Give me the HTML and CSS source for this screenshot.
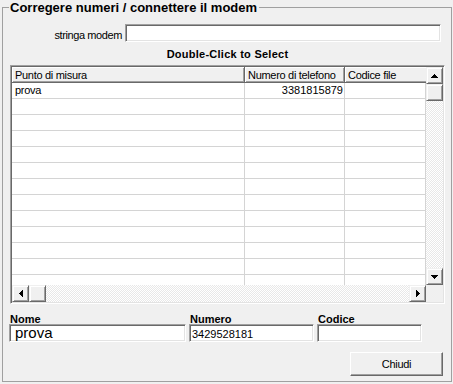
FILE: index.html
```html
<!DOCTYPE html>
<html>
<head>
<meta charset="utf-8">
<link rel="stylesheet" href="styles.css">
</head>
<body>
<div class="group">
  <div class="title">Corregere numeri / connettere il modem</div>
  <div class="modem-row">
    <span class="modem-label">stringa modem</span>
    <div class="edit modem-input"></div>
  </div>
  <div class="dbl">Double-Click to Select</div>
  <div class="listview">
    <div class="data">
      <div class="row head">
        <div class="c1">Punto di misura</div>
        <div class="c2">Numero di telefono</div>
        <div class="c3">Codice file</div>
      </div>
      <div class="row"><div class="c1">prova</div><div class="c2 num">3381815879</div><div class="c3"></div></div>
      <div class="row"><div class="c1"></div><div class="c2"></div><div class="c3"></div></div>
      <div class="row"><div class="c1"></div><div class="c2"></div><div class="c3"></div></div>
      <div class="row"><div class="c1"></div><div class="c2"></div><div class="c3"></div></div>
      <div class="row"><div class="c1"></div><div class="c2"></div><div class="c3"></div></div>
      <div class="row"><div class="c1"></div><div class="c2"></div><div class="c3"></div></div>
      <div class="row"><div class="c1"></div><div class="c2"></div><div class="c3"></div></div>
      <div class="row"><div class="c1"></div><div class="c2"></div><div class="c3"></div></div>
      <div class="row"><div class="c1"></div><div class="c2"></div><div class="c3"></div></div>
      <div class="row"><div class="c1"></div><div class="c2"></div><div class="c3"></div></div>
      <div class="row"><div class="c1"></div><div class="c2"></div><div class="c3"></div></div>
      <div class="row"><div class="c1"></div><div class="c2"></div><div class="c3"></div></div>
      <div class="row"><div class="c1"></div><div class="c2"></div><div class="c3"></div></div>
    </div>
    <div class="vscroll">
      <div class="sbtn"><svg width="7" height="4" viewBox="0 0 7 4"><path d="M3 0h1v1h1v1h1v1h1v1H0V3h1V2h1V1h1z" fill="#000"/></svg></div>
      <div class="sbtn"></div>
      <div class="track"></div>
      <div class="sbtn"><svg width="7" height="4" viewBox="0 0 7 4"><path d="M0 0h7v1H6v1H5v1H4v1H3V3H2V2H1V1H0z" fill="#000"/></svg></div>
    </div>
    <div class="hscroll">
      <div class="sbtn"><svg width="4" height="7" viewBox="0 0 4 7"><path d="M3 0h1v7H3V6H2V5H1V4H0V3h1V2h1V1h1z" fill="#000"/></svg></div>
      <div class="sbtn"></div>
      <div class="track"></div>
      <div class="sbtn"><svg width="4" height="7" viewBox="0 0 4 7"><path d="M0 0h1v1h1v1h1v1h1v1H3v1H2v1H1v1H0z" fill="#000"/></svg></div>
    </div>
    <div class="corner"></div>
  </div>
  <div class="fields">
    <div class="field f-nome">
      <div class="flabel">Nome</div>
      <div class="edit big">prova</div>
    </div>
    <div class="field f-num">
      <div class="flabel">Numero</div>
      <div class="edit">3429528181</div>
    </div>
    <div class="field f-cod">
      <div class="flabel">Codice</div>
      <div class="edit"></div>
    </div>
  </div>
  <div class="actions">
    <div class="button">Chiudi</div>
  </div>
</div>
</body>
</html>
```
FILE: styles.css
```css
html, body {
  margin: 0;
  padding: 0;
  background: #f0f0f0;
}
body {
  width: 453px;
  height: 384px;
  overflow: hidden;
  font-family: "Liberation Sans", Arial, sans-serif;
  font-size: 11px;
  color: #000;
}
.group {
  box-sizing: border-box;
  margin: 7px 0 0 2px;
  width: 450px;
  height: 375px;
  border: 1px solid #a0a0a0;
  display: flex;
  flex-direction: column;
}
.title {
  align-self: flex-start;
  margin: -8px 0 0 6px;
  padding: 0 2px 0 1px;
  background: #f0f0f0;
  font-weight: bold;
  font-size: 13px;
  line-height: 15px;
  height: 15px;
}
.modem-row {
  display: flex;
  align-items: center;
  margin-top: 9px;
  height: 18px;
}
.modem-label {
  width: 119px;
  text-align: right;
  letter-spacing: -0.4px;
  margin-right: 3px;
  padding-top: 3px;
}
.edit {
  box-sizing: border-box;
  height: 18px;
  background: #fff;
  border: 1px solid;
  border-color: #a0a0a0 #fff #fff #a0a0a0;
  box-shadow: inset 1px 1px #696969, inset -1px -1px #e3e3e3;
  padding: 2px 0 0 2px;
  line-height: 14px;
  white-space: nowrap;
  overflow: hidden;
}
.modem-input {
  width: 316px;
}
.dbl {
  margin-top: 6px;
  height: 13px;
  line-height: 13px;
  text-align: center;
  font-weight: bold;
  letter-spacing: 0.25px;
  padding-left: 1px;
}
.listview {
  margin: 4px 0 0 7px;
  width: 435px;
  height: 239px;
  box-sizing: border-box;
  border: 1px solid;
  border-color: #a0a0a0 #fff #fff #a0a0a0;
  box-shadow: inset 1px 1px #696969, inset -1px -1px #e3e3e3;
  padding: 1px;
  display: grid;
  grid-template-columns: 414px 17px;
  grid-template-rows: 218px 17px;
  background: #fff;
}
.data {
  overflow: hidden;
  background: #fff;
}
.row {
  display: grid;
  grid-template-columns: 233px 100px 81px;
  height: 16px;
}
.row > div {
  box-sizing: border-box;
  border-right: 1px solid #d4d4d4;
  border-bottom: 1px solid #d4d4d4;
  padding: 0 3px;
  line-height: 15px;
  letter-spacing: -0.3px;
  white-space: nowrap;
  overflow: hidden;
}
.row .num {
  text-align: right;
  letter-spacing: 0;
  padding-right: 1px;
}
.row.head > div {
  background: #f0f0f0;
  border-right: 1px solid #696969;
  border-bottom: 1px solid #696969;
  box-shadow: inset 1px 1px #fff, inset -1px -1px #a0a0a0;
  line-height: 16px;
}
.row.head > div.c3 {
  border-right: none;
  box-shadow: inset 1px 1px #fff, inset 0 -1px #a0a0a0;
}
.track {
  background: repeating-conic-gradient(#fff 0 25%, #e8e8e8 0 50%) 0 0 / 2px 2px;
}
.vscroll {
  display: grid;
  grid-template-rows: 17px 17px 1fr 17px;
}
.hscroll {
  display: grid;
  grid-template-columns: 17px 17px 1fr 17px;
}
.corner {
  background: #f0f0f0;
}
.sbtn {
  box-sizing: border-box;
  background: #f0f0f0;
  border: 1px solid;
  border-color: #f0f0f0 #696969 #696969 #f0f0f0;
  box-shadow: inset 1px 1px #fff, inset -1px -1px #a0a0a0;
  display: flex;
  align-items: center;
  justify-content: center;
}
.sbtn svg {
  display: block;
}
.fields {
  display: flex;
  gap: 3px;
  margin: 10px 0 0 6px;
}
.field {
  display: flex;
  flex-direction: column;
}
.flabel {
  font-weight: bold;
  font-size: 11px;
  line-height: 10px;
  height: 10px;
  padding-left: 1px;
}
.f-nome .edit { width: 177px; }
.f-num .edit { width: 125px; }
.f-cod .edit { width: 105px; }
.edit.big {
  font-size: 15px;
  line-height: 14px;
  padding-left: 5px;
  padding-top: 1px;
}
.actions {
  display: flex;
  justify-content: flex-end;
  margin: 10px 8px 0 0;
}
.button {
  box-sizing: border-box;
  width: 93px;
  height: 24px;
  background: #f0f0f0;
  border: 1px solid;
  border-color: #fff #696969 #696969 #fff;
  box-shadow: inset -1px -1px #a0a0a0, inset 1px 1px #f0f0f0;
  text-align: center;
  line-height: 22px;
  letter-spacing: -0.3px;
}
```
